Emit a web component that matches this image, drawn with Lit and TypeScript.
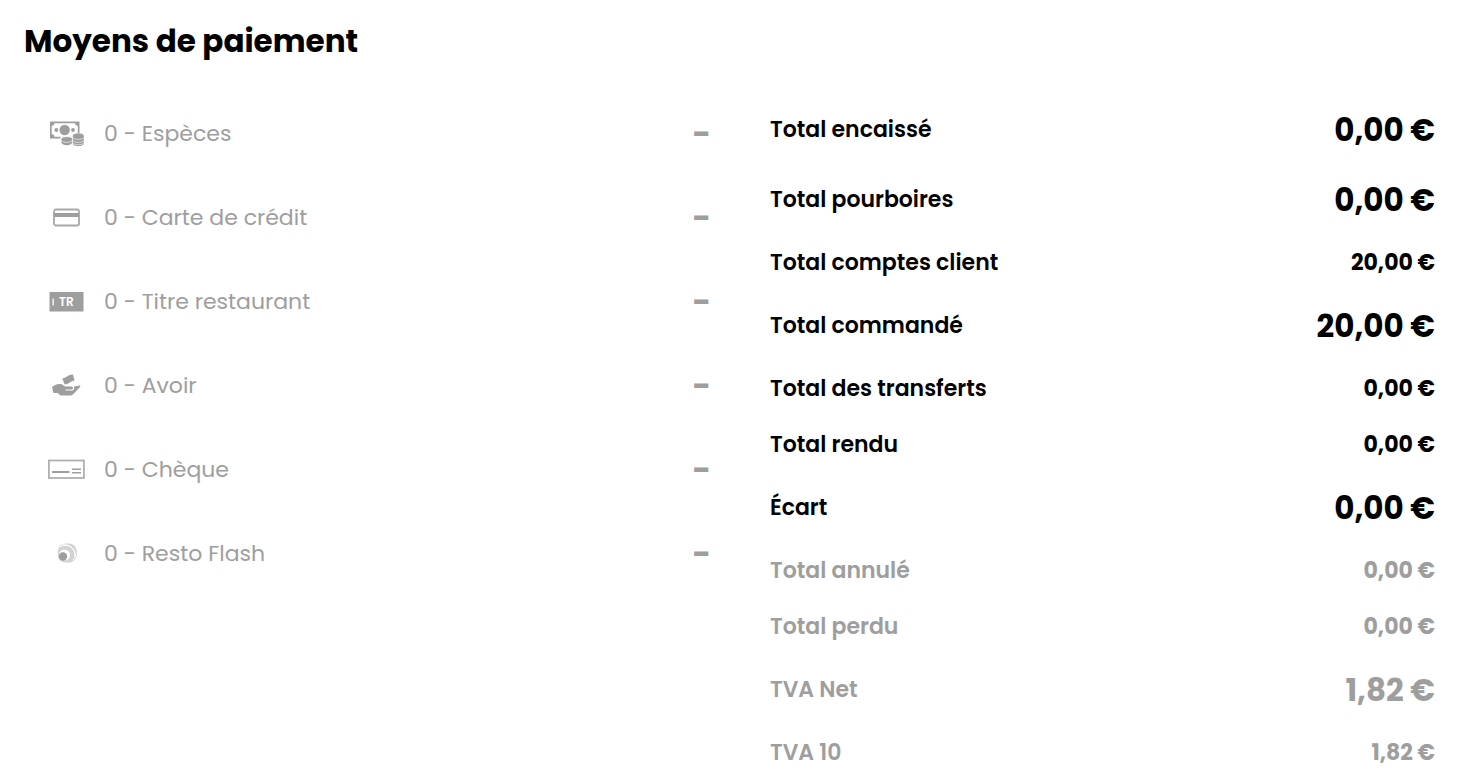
import { LitElement, html, css, svg } from "lit";
import { customElement } from "lit/decorators.js";
import { classMap } from "lit/directives/class-map.js";

const icons = {
  cash: svg`
    <path fill-rule="evenodd" d="M2 1.500H31.500V18.500H2ZM6.500 3.200A3 3 0 0 1 3.700 6V14A3 3 0 0 1 6.500 16.800H27A3 3 0 0 1 29.800 14V6A3 3 0 0 1 27 3.200Z"/>
    <circle cx="16.700" cy="10" r="5.200"/><circle cx="8.300" cy="10" r="1.900"/><circle cx="25" cy="10" r="1.900"/>
    <path fill="#fff" d="M12.500 16.500H23.500V13H36V26H12.500Z"/>
    <path d="M13.500 19V22.500C13.500 26 24 26 24 22.500V19Z"/><ellipse cx="18.800" cy="19" rx="5.300" ry="2"/>
    <path d="M24.800 15.500V23.500C24.800 27 35.800 27 35.800 23.500V15.500Z"/><ellipse cx="30.300" cy="15.500" rx="5.500" ry="2.200"/>
    <path fill="none" stroke="#fff" stroke-width="0.600" d="M13.500 20.500C15 23 22.500 23 24 20.500M24.800 17.500C26 20 34.500 20 35.800 17.500M24.800 20.500C26 23 34.500 23 35.800 20.500M24.800 23C26 25.300 34.500 25.300 35.800 23"/>`,
  card: svg`
    <rect x="6" y="5.500" width="25" height="16" rx="2" fill="none" stroke="#a8a8a8" stroke-width="1.800"/>
    <rect x="6" y="9" width="25" height="4"/>`,
  ticket: svg`
    <rect x="1.500" y="4" width="34" height="19.500"/>
    <rect x="4.500" y="10.500" width="1.300" height="7" fill="#fff"/>
    <text class="tr" x="11" y="18">TR</text>`,
  credit: svg`
    <path d="M14.300 6.500C18 6.200 20 2.300 25 2.500L26.600 8.500C23 8.800 20.500 12.500 16.500 12.300Z"/>
    <path d="M4 15C7 13 9 11.800 12 12C15 12 15.500 14.500 18 14.500H23.500C25.500 14.500 25.500 17.500 23.500 17.500H17.500V18.500H24.500C26.500 18 26.500 15.500 25.500 14.700L31 13.500Q33.500 13.300 32 15L25.500 22Q24 23.500 22 23.500H12.500L9.500 21H5.500Z"/>`,
  cheque: svg`
    <rect x="0.900" y="4.500" width="35" height="17.500" fill="none" stroke="#b0b0b0" stroke-width="1.800"/>
    <rect x="4" y="15" width="17.500" height="2"/>
    <rect x="24" y="12.500" width="9" height="1.500"/><rect x="24" y="16" width="9" height="1.500"/>`,
  flash: svg`
    <rect x="9.800" y="3.500" width="19" height="19" rx="8" fill="#d2d2d2"/>
    <g fill="none" stroke="#fff" stroke-width="0.900">
      <path d="M12 7A9.500 9.500 0 0 1 25 20.500"/><path d="M14 5A11 11 0 0 1 27.500 17"/>
    </g>
    <circle cx="16.500" cy="15" r="5.500" fill="#fff"/>
    <circle cx="15" cy="16.500" r="4.200"/>`,
};

const methods = [
  { icon: icons.cash, label: "0 - Espèces" },
  { icon: icons.card, label: "0 - Carte de crédit" },
  { icon: icons.ticket, label: "0 - Titre restaurant" },
  { icon: icons.credit, label: "0 - Avoir" },
  { icon: icons.cheque, label: "0 - Chèque" },
  { icon: icons.flash, label: "0 - Resto Flash" },
];

const totals = [
  { label: "Total encaissé", value: "0,00 €", big: true },
  { label: "Total pourboires", value: "0,00 €", big: true },
  { label: "Total comptes client", value: "20,00 €" },
  { label: "Total commandé", value: "20,00 €", big: true },
  { label: "Total des transferts", value: "0,00 €" },
  { label: "Total rendu", value: "0,00 €" },
  { label: "Écart", value: "0,00 €", big: true },
  { label: "Total annulé", value: "0,00 €", muted: true },
  { label: "Total perdu", value: "0,00 €", muted: true },
  { label: "TVA Net", value: "1,82 €", big: true, muted: true },
  { label: "TVA 10", value: "1,82 €", muted: true },
];

@customElement("app-root")
export class AppRoot extends LitElement {
  static styles = css`
    :host {
      display: block;
      box-sizing: border-box;
      padding: 17px 37px 0 24px;
      background: #fff;
      color: #000;
      font-family: Poppins, Inter, "Open Sans", sans-serif;
      font-size: 22px;
    }
    .title {
      margin: 0;
      font-size: 31px;
      line-height: 48px;
      font-weight: 700;
    }
    .columns {
      display: grid;
      grid-template-columns: minmax(0, 687fr) minmax(0, 665fr);
      column-gap: 59px;
      padding-top: 41px;
    }
    .methods {
      display: grid;
      align-content: start;
      row-gap: 50px;
      margin: 0;
      padding: 11px 0 0 24px;
      list-style: none;
      color: #9e9e9e;
    }
    .method {
      display: flex;
      align-items: center;
      gap: 19px;
      line-height: 34px;
    }
    .icon {
      flex: none;
      width: 37px;
      height: 28px;
      fill: #9e9e9e;
    }
    .tr {
      fill: #fff;
      font-size: 12px;
      font-weight: 600;
    }
    .dash {
      margin-left: auto;
      font-size: 32px;
      font-weight: 700;
    }
    .totals {
      display: grid;
      align-content: start;
      row-gap: 22px;
      margin: 0;
    }
    .total {
      display: flex;
      align-items: center;
      justify-content: space-between;
      gap: 16px;
      line-height: 34px;
    }
    .label {
      font-weight: 600;
    }
    .value {
      margin: 0;
      font-weight: 700;
      white-space: nowrap;
    }
    .big .value {
      font-size: 31px;
      line-height: 48px;
    }
    .muted {
      color: #9e9e9e;
    }
  `;

  render() {
    return html`
      <h1 class="title">Moyens de paiement</h1>
      <div class="columns">
        <ul class="methods">
          ${methods.map(
            (m) => html`<li class="method">
              <svg class="icon" viewBox="0 0 37 28" aria-hidden="true">${m.icon}</svg>
              <span>${m.label}</span>
              <span class="dash">-</span>
            </li>`
          )}
        </ul>
        <dl class="totals">
          ${totals.map(
            (t) => html`<div class=${classMap({ total: true, big: !!t.big, muted: !!t.muted })}>
              <dt class="label">${t.label}</dt>
              <dd class="value">${t.value}</dd>
            </div>`
          )}
        </dl>
      </div>
    `;
  }
}
